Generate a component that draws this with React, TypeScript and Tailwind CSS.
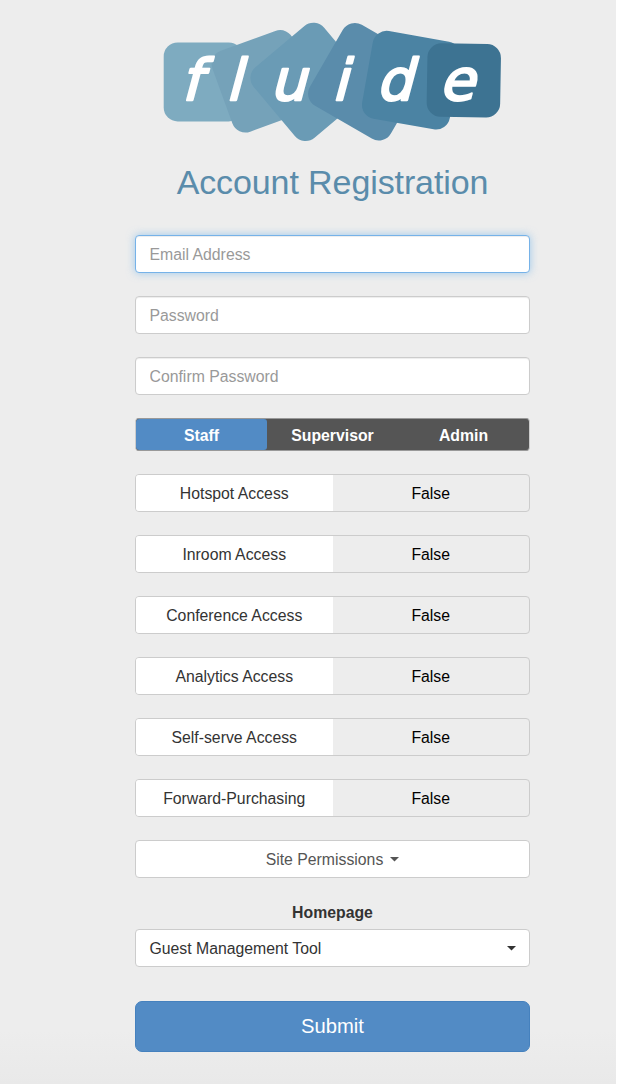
import type { ReactNode } from "react";

const tiles = [
  { cx: 203.2, cy: 81.9, size: 79, angle: 0, fill: "#7eabc0" },
  { cx: 262.8, cy: 81.3, size: 86, angle: -20, fill: "#75a2b9" },
  { cx: 309.5, cy: 81.9, size: 92, angle: -40, fill: "#6a9bb5" },
  { cx: 366.8, cy: 81.7, size: 93.5, angle: 30, fill: "#5a8cab" },
  { cx: 411.3, cy: 80.2, size: 89, angle: 10, fill: "#4b83a3" },
  { cx: 463.8, cy: 80.4, size: 73.5, angle: 1, fill: "#3d7392" },
];

const letters = [
  { char: "f", x: 191 },
  { char: "l", x: 233.5 },
  { char: "u", x: 287.5 },
  { char: "i", x: 339.5 },
  { char: "d", x: 394 },
  { char: "e", x: 456.5 },
];

const accessRows = [
  "Hotspot Access",
  "Inroom Access",
  "Conference Access",
  "Analytics Access",
  "Self-serve Access",
  "Forward-Purchasing",
];

function Logo() {
  return (
    <svg viewBox="160 20 344 124" className="ml-[25px] h-[124px] w-[344px]" role="img">
      {tiles.map((t) => (
        <rect
          key={t.fill}
          x={t.cx - t.size / 2}
          y={t.cy - t.size / 2}
          width={t.size}
          height={t.size}
          rx={14}
          fill={t.fill}
          transform={`rotate(${t.angle} ${t.cx} ${t.cy})`}
        />
      ))}
      {letters.map((l) => (
        <text
          key={l.char}
          transform={`translate(${l.x} 100.2) skewX(-15)`}
          textAnchor="middle"
          fill="#fff"
          stroke="#fff"
          strokeWidth={2.4}
          strokeLinejoin="round"
          fontSize={57}
          fontFamily="'DejaVu Sans', sans-serif"
        >
          {l.char}
        </text>
      ))}
    </svg>
  );
}

function Caret() {
  return (
    <svg viewBox="0 0 9 5" className="h-[5px] w-[9px]" fill="currentColor">
      <path d="M0 0h9L4.5 4.6z" />
    </svg>
  );
}

function Field({ label, focused }: { label: string; focused?: boolean }) {
  return (
    <input
      placeholder={label}
      className={
        "block h-[38px] w-full rounded-[4px] border bg-white px-[13.5px] pt-[1px] outline-none placeholder:text-[#999] " +
        (focused
          ? "border-[#76b2e8] shadow-[inset_0_1px_1px_rgba(0,0,0,0.075),0_0_9px_rgba(102,175,233,0.6)]"
          : "border-[#ccc] shadow-[inset_0_1px_1px_rgba(0,0,0,0.075)]")
      }
    />
  );
}

function Box({ children, className }: { children: ReactNode; className: string }) {
  return (
    <div className={"flex h-[38px] overflow-hidden rounded-[4px] border border-[#ccc] " + className}>
      {children}
    </div>
  );
}

export default function App() {
  return (
    <div className="h-[1084px] w-[618px] bg-white pr-[2px]">
      <div className="h-full bg-[#ededed] bg-[linear-gradient(to_bottom,#ededed_1030px,#e9e9e9_1084px)] pl-[135px] pt-[20px] font-['Liberation_Sans',Arial,sans-serif] text-[15.8px] leading-[22px] text-[#333]">
        <div className="w-[395px]">
          <Logo />
          <h1 className="mt-[18px] h-[40px] whitespace-nowrap text-center text-[34px] leading-[40px] tracking-[-0.1px] text-[#5a8cab]">
            Account Registration
          </h1>
          <form className="mt-[33px] flex flex-col gap-[23px]">
            <Field label="Email Address" focused />
            <Field label="Password" />
            <Field label="Confirm Password" />
            <div className="flex h-[33px] overflow-hidden rounded-[4px] border border-x-[#ccc] border-y-[#999] bg-[#555] font-bold leading-[34px] text-white">
              <div className="flex-1 rounded-[3px] bg-[#528bc5] text-center">Staff</div>
              <div className="flex-1 text-center">Supervisor</div>
              <div className="flex-1 text-center">Admin</div>
            </div>
            {accessRows.map((row) => (
              <Box key={row} className="leading-[38px]">
                <div className="flex-1 bg-white text-center">{row}</div>
                <div className="flex-1 text-center text-black">False</div>
              </Box>
            ))}
            <Box className="items-center justify-center gap-[7px] bg-white pt-[1px] text-[#555]">
              Site Permissions
              <Caret />
            </Box>
            <div>
              <div className="mb-[5px] pt-[1px] text-center font-bold">Homepage</div>
              <Box className="items-center justify-between bg-white px-[13.5px] pt-[1px]">
                Guest Management Tool
                <Caret />
              </Box>
            </div>
            <button
              type="button"
              className="mt-[11px] h-[51px] rounded-[7px] border border-[#4581be] bg-[#528bc5] pb-[2px] text-[20.2px] text-white"
            >
              Submit
            </button>
          </form>
        </div>
      </div>
    </div>
  );
}
